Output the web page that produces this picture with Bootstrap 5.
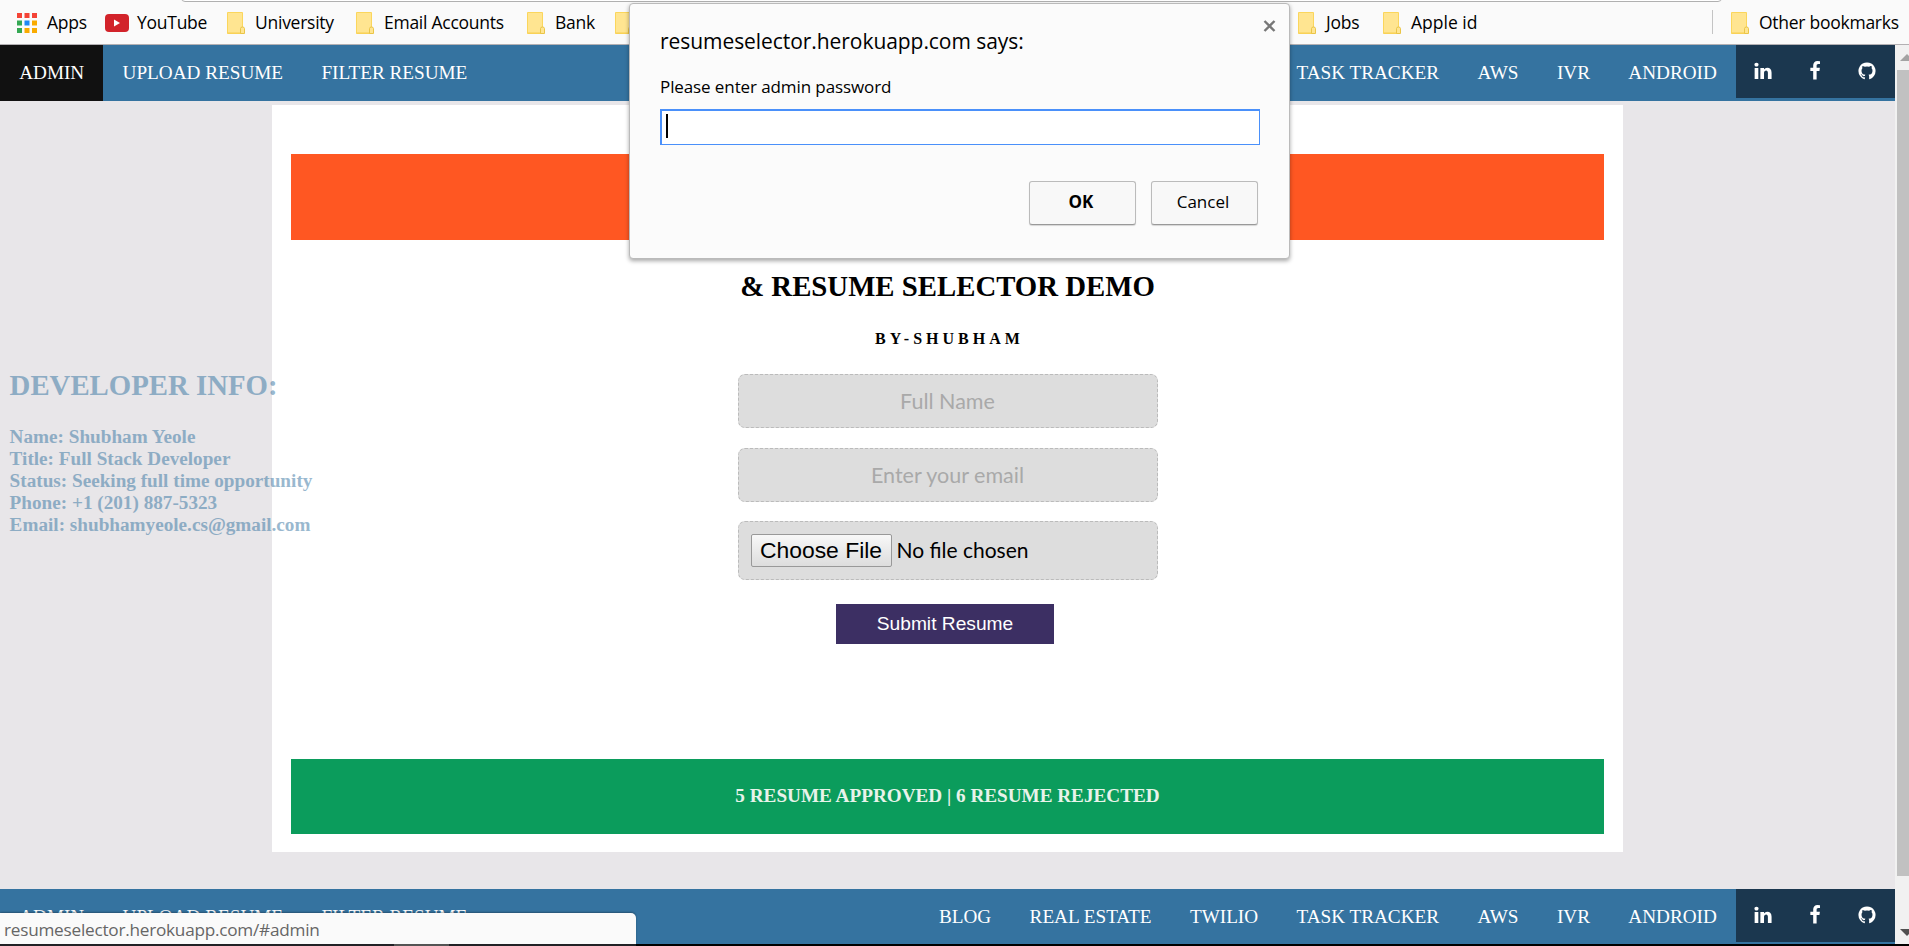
<!DOCTYPE html>
<html lang="en">
<head>
<meta charset="utf-8">
<title>Resume Selector</title>
<link rel="stylesheet" href="https://cdn.jsdelivr.net/npm/bootstrap@5.3.0/dist/css/bootstrap.min.css">
<style>
html, body { height: 946px; overflow: hidden; }
body { background: #000; font-family: "Liberation Serif", serif; font-size: 19.2px; line-height: 22px; color: #000; }
.ui { font-family: "Open Sans", "Noto Sans", sans-serif; }
.bookmarks { height: 45px; background: #fafafa; border-bottom: 1px solid #b3b0b3; font-size: 17.5px; letter-spacing: -.26px; }
.omni { left: 181px; top: -8px; width: 1541px; height: 10px; border: 1px solid #b0b0b0; border-radius: 4px; background: #fff; }
.bm { position: relative; height: 43px; flex: none; white-space: nowrap; }
.bm svg { flex: none; margin-right: 10px; margin-top: 2px; }
.bm-sep { width: 1px; height: 24px; background: #c4c4c4; }
.page { height: 899px; background: #e8e6e9; }
.site-nav { height: 56px; background: #3573a0; flex: none; }
.site-nav a { color: #fff; text-decoration: none; padding: 17px 19.2px 17px; height: 56px; white-space: nowrap; }
.site-nav a.current { background: #111; }
.social { background: #1b374f; width: 159px; height: 53px; padding: 0 18px 2px 17px; }
.sheet { width: 1351px; height: 747px; margin: 4px 0 0 272px; padding: 49px 19px 18px; background: #fff; flex: none; }
.banner { height: 86px; background: #ff5722; }
.title { font-size: 28.8px; line-height: 33px; font-weight: 700; margin: 30px 0 0; }
.by { font-size: 16px; line-height: 18px; font-weight: 700; letter-spacing: 4px; margin: 27px 0 0; padding-left: 4px; }
.field { width: 420px; border: 1px dashed #bbb; border-radius: 7px; background: #ddd; font-family: Lato, sans-serif; font-size: 21.5px; }
.field.line { height: 54px; color: #a9a9a9; text-align: center; padding: 0; }
.field.line::placeholder { color: #a9a9a9; opacity: 1; }
.field.file { height: 59px; padding: 0 12px; font-size: 21px; }
.choose { width: 141px; height: 33px; border: 1px solid #999; border-radius: 2px; background: linear-gradient(#f8f8f8, #ddd); font: 22.9px/28px "Liberation Sans", sans-serif; padding: 0 0 2px; color: #000; }
.submit { width: 218px; height: 40px; background: #3c2f63; color: #fff; border: 0; border-radius: 0; font: 19.2px "Liberation Sans", sans-serif; margin: 24px 5px 0 0; padding: 0; }
.totals { height: 75px; background: #0b9c5c; color: #e8f3ea; font-weight: 700; padding-bottom: 1px; }
.dev { left: 9.6px; top: 369px; color: #3573a0; opacity: .5; font-weight: 700; white-space: nowrap; }
.dev h2 { font: 700 28.8px/33px "Liberation Serif", serif; margin: 0 0 24px; }
.scroll { width: 14px; height: 899px; background: #f1f1f1; }
.thumb { width: 12px; height: 806px; margin: 0 0 0 2px; background: #c1c1c1; }
.dialog { left: 629px; top: 3px; width: 661px; height: 256px; background: #fbfbfb; border: 1px solid #bababa; border-radius: 4px; box-shadow: 0 2px 4px rgba(0,0,0,.35); padding: 22px 29px 0 30px; z-index: 5; }
.dialog h1 { font-size: 21px; line-height: 30px; margin: 0; font-weight: 400; letter-spacing: -.06px; }
.dialog p { font-size: 17px; line-height: 24px; margin: 19px 0 10px; letter-spacing: -.1px; }
.prompt { height: 36px; border: 2px solid #4a90fa; border-width: 2px 1px 1px 2px; background: #fff; padding: 3px 4px; width: 600px; }
.caret { width: 2px; height: 24px; background: #000; }
.dialog .choice { width: 107px; height: 44px; border: 1px solid #bbb; border-bottom-color: #999; border-radius: 3px; background: #f8f8f8; box-shadow: 0 1px 1px rgba(0,0,0,.15); font-size: 17px; padding: 0 3px 3px 0; line-height: 36px; letter-spacing: 0; color: #000; }
.close-x { right: 13px; top: 16px; }
.status { left: 0; top: 913px; width: 636px; height: 31px; background: #fafafa; border-radius: 0 5px 0 0; color: #666; font-size: 17.2px; line-height: 33px; padding-left: 4px; letter-spacing: -.24px; z-index: 4; box-shadow: 0 -1px 2px rgba(0,0,0,.3); }
.edge { height: 2px; background: #222226; width: 636px; }
.edge div { width: 55px; height: 2px; margin-left: 394px; background: #555; }
</style>
</head>
<body>
<svg class="d-none">
  <symbol id="folder" viewBox="0 0 18 22"><path d="M.5 .5h15v21h-15z" fill="#ffe591" stroke="#fbd65c"/><path d="M.5 20.500h15v1h-15z" fill="#f7cf50"/><path d="M13.500 21.500v-5q0-1.500 2-1.500t2 1.500v5z" fill="#ffe591" stroke="#eac548"/></symbol>
  <symbol id="in" viewBox="0 0 1792 1792"><path fill="#fff" d="M477 625v991h-330v-991h330zm21-306q1 73-50.5 122t-135.5 49h-2q-82 0-132-49t-50-122q0-74 51.5-122.5t134.500-48.500 133 48.500 51 122.500zm1166 729v568h-329v-530q0-105-40.500-164.500t-126.500-59.500q-63 0-105.500 34.500t-63.500 85.500q-11 30-11 81v553h-329q2-399 2-647t-1-296l-1-48h329v144h-2q20-32 41-56t56.500-52 87-43.500 114.500-15.500q171 0 275 113.500t104 332.500z"/></symbol>
  <symbol id="fb" viewBox="0 0 1792 1792"><path fill="#fff" d="M1343 12v264h-157q-86 0-116 36t-30 108v189h293l-39 296h-254v759h-306v-759h-255v-296h255v-218q0-186 104-288.500t277-102.500q147 0 228 12z"/></symbol>
  <symbol id="gh" viewBox="0 0 1792 1792"><path fill="#fff" d="M1664 896q0 251-146.500 451.500t-378.500 277.500q-27 5-39.500-7t-12.500-30v-211q0-97-52-142 57-6 102.500-18t94-39 81-66.500 53-105 20.500-150.500q0-121-79-206 37-91-8-204-28-9-81 11t-92 44l-38 24q-93-26-192-26t-192 26q-16-11-42.500-27t-83.500-38.500-86-13.500q-44 113-7 204-79 85-79 206 0 85 20.500 150t52.500 105 80.500 67 94 39 102.500 18q-40 36-49 103-21 10-45 15t-57 5-65.500-21.500-55.500-62.500q-19-32-48.500-52t-49.500-24l-20-3q-21 0-29 4.500t-5 11.500 9 14 13 12l7 5q22 10 43.500 38t31.500 51l10 23q13 38 44 61.500t67 30 69.500 7 55.500-3.500l23-4q0 38 .5 89t.5 54q0 18-13 30t-40 7q-232-77-378.500-277.500t-146.500-451.500q0-209 103-385.500t279.500-279.500 385.500-103 385.500 103 279.500 279.500 103 385.500z"/></symbol>
</svg>

<div class="bookmarks ui d-flex align-items-center position-relative overflow-hidden">
  <div class="omni position-absolute"></div>
  <div class="bm d-flex align-items-center" style="margin-left:17px;width:88px"><svg width="20" height="20" viewBox="0 0 20 20"><path fill="#f44336" d="M0 0h5v5H0zM7.500 0h5v5h-5zM15 0h5v5h-5z"/><path fill="#34a853" d="M0 7.500h5v5H0zM0 15h5v5H0z"/><path fill="#1e88f5" d="M7.500 7.500h5v5h-5z"/><path fill="#f9ab00" d="M15 7.500h5v5h-5zM7.500 15h5v5h-5zM15 15h5v5h-5z"/></svg>Apps</div>
  <div class="bm d-flex align-items-center" style="width:122px"><svg style="margin-right:8px" width="24" height="18" viewBox="0 0 24 18"><rect width="24" height="18" rx="4" fill="#d2232a"/><path d="M9 5.500v7l6-3.500z" fill="#fff"/></svg>YouTube</div>
  <div class="bm d-flex align-items-center" style="width:129px"><svg width="18" height="22"><use href="#folder"/></svg>University</div>
  <div class="bm d-flex align-items-center" style="width:171px"><svg width="18" height="22"><use href="#folder"/></svg>Email Accounts</div>
  <div class="bm d-flex align-items-center" style="width:88px"><svg width="18" height="22"><use href="#folder"/></svg>Bank</div>
  <div class="bm d-flex align-items-center" style="width:683px"><svg width="18" height="22"><use href="#folder"/></svg></div>
  <div class="bm d-flex align-items-center" style="width:85px"><svg width="18" height="22"><use href="#folder"/></svg>Jobs</div>
  <div class="bm d-flex align-items-center" style="width:329px"><svg width="18" height="22"><use href="#folder"/></svg><span style="letter-spacing:0">Apple id</span></div>
  <div class="bm-sep"></div>
  <div class="bm d-flex align-items-center" style="margin-left:18px"><svg width="18" height="22"><use href="#folder"/></svg>Other bookmarks</div>
</div>

<div class="d-flex">
  <main class="page flex-grow-1 d-flex flex-column">
    <nav class="site-nav d-flex">
      <a class="current" href="#admin">ADMIN</a><a href="#upload">UPLOAD RESUME</a><a href="#filter">FILTER RESUME</a>
      <a class="ms-auto" href="#blog">BLOG</a><a href="#estate">REAL ESTATE</a><a href="#twilio">TWILIO</a><a href="#task">TASK TRACKER</a><a href="#aws">AWS</a><a href="#ivr">IVR</a><a href="#android">ANDROID</a>
      <div class="social d-flex justify-content-between align-items-center"><svg width="20" height="20"><use href="#in"/></svg><svg width="20" height="20"><use href="#fb"/></svg><svg width="20" height="20"><use href="#gh"/></svg></div>
    </nav>
    <section class="sheet d-flex flex-column align-items-center text-center">
      <div class="banner w-100"></div>
      <h2 class="title">&amp; RESUME SELECTOR DEMO</h2>
      <h5 class="by">BY-SHUBHAM</h5>
      <input class="field line" style="margin-top:26px" placeholder="Full Name">
      <input class="field line" style="margin-top:20px" placeholder="Enter your email">
      <div class="field file d-flex align-items-center" style="margin-top:19px"><button class="choose">Choose File</button><span style="margin-left:5px;padding-bottom:1px">No file chosen</span></div>
      <button class="submit btn">Submit Resume</button>
      <div class="totals w-100 mt-auto d-flex align-items-center justify-content-center">5 RESUME APPROVED | 6 RESUME REJECTED</div>
    </section>
    <nav class="site-nav d-flex mt-auto" style="height:55px">
      <a href="#admin">ADMIN</a><a href="#upload">UPLOAD RESUME</a><a href="#filter">FILTER RESUME</a>
      <a class="ms-auto" href="#blog">BLOG</a><a href="#estate">REAL ESTATE</a><a href="#twilio">TWILIO</a><a href="#task">TASK TRACKER</a><a href="#aws">AWS</a><a href="#ivr">IVR</a><a href="#android">ANDROID</a>
      <div class="social d-flex justify-content-between align-items-center"><svg width="20" height="20"><use href="#in"/></svg><svg width="20" height="20"><use href="#fb"/></svg><svg width="20" height="20"><use href="#gh"/></svg></div>
    </nav>
  </main>
  <div class="scroll d-flex flex-column">
    <svg width="14" height="25"><path d="M5 16l7-7 7 7z" fill="#a3a3a3"/></svg>
    <div class="thumb"></div>
    <svg class="mt-auto" width="14" height="25"><path d="M5 10h14l-7 7z" fill="#505050"/></svg>
  </div>
</div>
<div class="edge"><div></div></div>

<aside class="dev position-absolute">
  <h2>DEVELOPER INFO:</h2>
  <div>Name: Shubham Yeole</div><div>Title: Full Stack Developer</div><div>Status: Seeking full time opportunity</div><div>Phone: +1 (201) 887-5323</div><div>Email: shubhamyeole.cs@gmail.com</div>
</aside>

<div class="dialog ui position-absolute">
  <svg class="close-x position-absolute" width="13" height="12"><path d="M1.500 1l10 10M11.500 1l-10 10" stroke="#777" stroke-width="2.400"/></svg>
  <h1>resumeselector.herokuapp.com says:</h1>
  <p>Please enter admin password</p>
  <div class="prompt"><div class="caret"></div></div>
  <div class="d-flex justify-content-end" style="gap:15px;margin-top:36px;padding-right:2px"><button class="choice btn fw-bold">OK</button><button class="choice btn">Cancel</button></div>
</div>
<div class="status ui position-absolute">resumeselector.herokuapp.com/#admin</div>
<script src="https://cdn.jsdelivr.net/npm/bootstrap@5.3.0/dist/js/bootstrap.bundle.min.js"></script>
</body>
</html>
